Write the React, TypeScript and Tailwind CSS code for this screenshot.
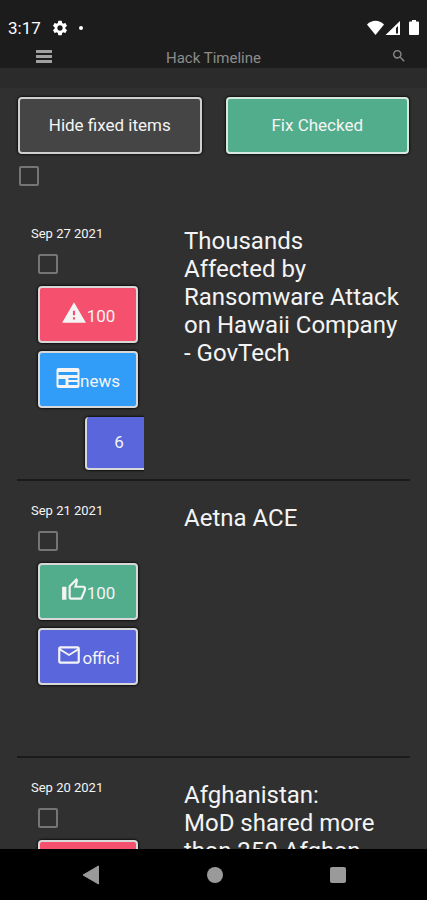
import type { ReactNode } from "react";
import {
  MdMailOutline,
  MdOutlineThumbUp,
  MdSearch,
  MdSettings,
  MdWarning,
} from "react-icons/md";

type Tag = {
  label: string;
  icon: ReactNode;
  className: string;
};

type Item = {
  date: string;
  title: string;
  tags: Tag[];
  count?: number;
};

function NewsIcon() {
  return (
    <svg viewBox="0 0 23 20" className="mb-1 h-5 w-6" fill="currentColor" aria-hidden="true">
      <path
        fillRule="evenodd"
        d="M2 0h19a2 2 0 0 1 2 2v16a2 2 0 0 1-2 2H2a2 2 0 0 1-2-2V2a2 2 0 0 1 2-2zM2 4v3h19V4zM2 11v6h7v-6zM12 10v2h9v-2zM12 14v3h9v-3z"
      />
    </svg>
  );
}

const items: Item[] = [
  {
    date: "Sep 27 2021",
    title: "Thousands\nAffected by\nRansomware Attack\non Hawaii Company\n- GovTech",
    tags: [
      { label: "100", icon: <MdWarning className="mb-1 size-[26px]" />, className: "bg-[#f5506e]" },
      { label: "news", icon: <NewsIcon />, className: "bg-[#319df8]" },
    ],
    count: 6,
  },
  {
    date: "Sep 21 2021",
    title: "Aetna ACE",
    tags: [
      {
        label: "100",
        icon: <MdOutlineThumbUp className="mb-1 size-[26px]" />,
        className: "bg-[#52ad8c]",
      },
      {
        label: "offici",
        icon: <MdMailOutline className="mb-1 size-[26px]" />,
        className: "bg-[#5966dc]",
      },
    ],
  },
  {
    date: "Sep 20 2021",
    title: "Afghanistan:\nMoD shared more\nthan 250 Afghan",
    tags: [
      { label: "100", icon: <MdWarning className="mb-1 size-[26px]" />, className: "bg-[#f5506e]" },
    ],
  },
];

function Checkbox({ label }: { label: string }) {
  return (
    <input
      type="checkbox"
      aria-label={label}
      className="block size-5 appearance-none rounded-xs border-2 border-[#757575] checked:bg-[#757575]"
    />
  );
}

function StatusBar() {
  return (
    <div className="flex h-12 items-end justify-between px-2 pb-2 text-white">
      <div className="flex items-center gap-2.5">
        <span className="text-[17px] leading-6">3:17</span>
        <MdSettings className="size-[18px]" />
        <span className="size-1 rounded-full bg-white" />
      </div>
      <div className="flex h-6 items-center gap-2">
        <svg viewBox="0 0 34 16" className="h-4 w-[34px]" fill="currentColor" aria-hidden="true">
          <path d="M0 4.500C5-.5 12-.5 17 4.500L8.500 15z" />
          <path fillRule="evenodd" d="M33 1v14H18.500zM31 6l-2 2v5.500h2z" />
        </svg>
        <svg viewBox="0 0 10 16" className="h-4 w-2.5" fill="currentColor" aria-hidden="true">
          <path d="M3 0h4v1.500h2q1 0 1 1V14q0 1-1 1H1q-1 0-1-1V2.500q0-1 1-1h2z" />
        </svg>
      </div>
    </div>
  );
}

function TimelineRow({ item }: { item: Item }) {
  return (
    <li className="flex h-[277px] border-b-2 border-[#1b1b1b] pt-5">
      <div className="w-[127px] shrink-0 overflow-hidden">
        <p className="pl-3.5 text-[13px] leading-5">{item.date}</p>
        <div className="mt-2.5 pl-[21px]">
          <Checkbox label={item.title} />
        </div>
        <div className="mt-3 flex flex-col gap-2 pl-[21px]">
          {item.tags.map((tag) => (
            <button
              key={tag.label}
              className={`flex h-[57px] w-[100px] items-center justify-center rounded-sm border-2 border-[#d8d8d8] text-[17px] shadow-[0_0_2px_1px_#111] ${tag.className}`}
            >
              {tag.icon}
              <span className="pt-1">{tag.label}</span>
            </button>
          ))}
        </div>
        {item.count && (
          <button className="mt-[9px] ml-[68px] h-[53px] w-[68px] rounded-sm border-2 border-t-0 border-[#d8d8d8] bg-[#5966dc] text-[17px] shadow-[0_0_2px_1px_#111]">
            {item.count}
          </button>
        )}
      </div>
      <h2 className="ml-10 min-w-0 flex-1 pt-[3px] text-2xl leading-7 whitespace-pre-line">
        {item.title}
      </h2>
    </li>
  );
}

export default function App() {
  return (
    <div className="flex h-screen flex-col bg-[#303030] font-['Roboto',sans-serif] text-[#f4f4f4]">
      <header className="shrink-0 bg-[#1c1c1c]">
        <StatusBar />
        <div className="grid h-5 grid-cols-3 items-center px-5 text-[#8c8c8c]">
          <button aria-label="Menu" className="ml-4 flex w-4 flex-col gap-0.5 pb-1">
            <span className="h-[3px] bg-[#a0a0a0]" />
            <span className="h-[3px] bg-[#a0a0a0]" />
            <span className="h-[3px] bg-[#a0a0a0]" />
          </button>
          <h1 className="text-center text-[15px] leading-5">Hack Timeline</h1>
          <button aria-label="Search" className="justify-self-end pb-1">
            <MdSearch className="size-4" />
          </button>
        </div>
      </header>

      <main className="min-h-0 flex-1 overflow-hidden">
        <div className="h-5 bg-[#2b2b2b]" />
        <div className="flex gap-6 px-[18px] pt-[9px]">
          <button className="h-[57px] flex-1 rounded-sm border-2 border-[#d0d0d0] bg-[#454545] text-[17px] shadow-[0_0_2px_1px_#111]">
            Hide fixed items
          </button>
          <button className="h-[57px] flex-1 rounded-sm border-2 border-[#d8e8e0] bg-[#52ad8c] text-[17px] shadow-[0_0_2px_1px_#111]">
            Fix Checked
          </button>
        </div>
        <div className="px-[19px] pt-3">
          <Checkbox label="Select all" />
        </div>

        <ul className="mt-[18px] px-[17px]">
          {items.map((item) => (
            <TimelineRow key={item.date} item={item} />
          ))}
        </ul>
      </main>

      {/* system navigation */}
      <nav className="flex h-[51px] shrink-0 items-center justify-around bg-black px-7 text-[#9a9a9a]">
        <button aria-label="Back">
          <svg viewBox="0 0 18 20" className="h-5 w-[18px]" fill="currentColor">
            <path d="M16.500 1v18L1 10z" stroke="currentColor" strokeLinejoin="round" />
          </svg>
        </button>
        <button aria-label="Home" className="size-4 rounded-full bg-[#9a9a9a]" />
        <button aria-label="Recent apps" className="size-4 rounded-xs bg-[#9a9a9a]" />
      </nav>
    </div>
  );
}
